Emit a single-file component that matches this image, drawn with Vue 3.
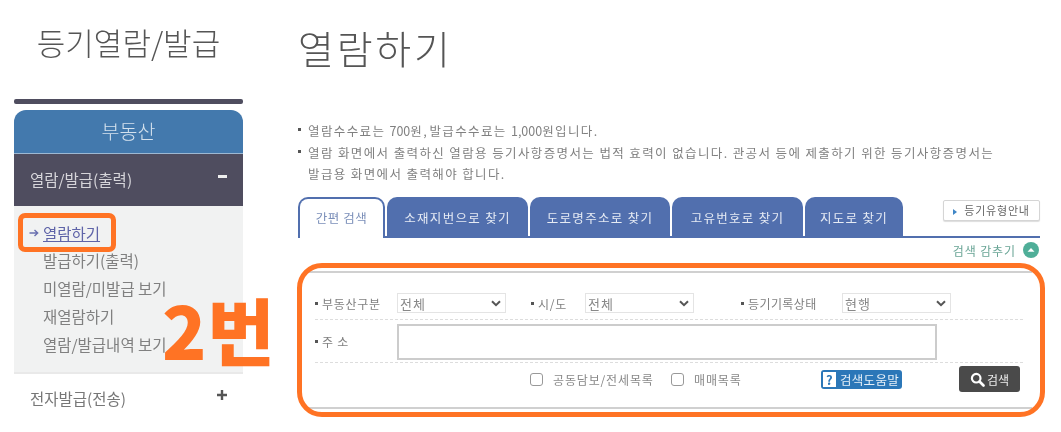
<script setup>
const items = ['발급하기(출력)', '미열람/미발급 보기', '재열람하기', '열람/발급내역 보기']
const tabs = [
  { label: '소재지번으로 찾기', w: 141 },
  { label: '도로명주소로 찾기', w: 140 },
  { label: '고유번호로 찾기', w: 131 },
  { label: '지도로 찾기', w: 98 },
]
</script>

<template>
  <div class="page">
    <aside class="side">
      <h2 class="side-title">등기열람/발급</h2>
      <div class="side-rule"></div>
      <div class="side-head">부동산</div>
      <div class="group open"><span>열람/발급(출력)</span><i class="minus"></i></div>
      <ul class="sub">
        <li class="current">
          <svg class="arrow" width="10" height="8" viewBox="0 0 10 8"><path d="M0.5 4H8.5M5.5 1 8.7 4 5.5 7" fill="none" stroke="#6a70b0" stroke-width="1.4" /></svg>
          <a>열람하기</a>
        </li>
        <li v-for="t in items" :key="t">{{ t }}</li>
      </ul>
      <div class="group closed"><span>전자발급(전송)</span><svg class="plus" width="10" height="10" viewBox="0 0 10 10"><path d="M5 0V10M0 5H10" stroke="#555" stroke-width="2.4" /></svg></div>
    </aside>

    <main class="main">
      <h1 class="title">열람하기</h1>
      <ul class="notes">
        <li>열람수수료는 <span class="num">700</span>원<span class="num">, </span>발급수수료는 <span class="num">1,000</span>원입니다.</li>
        <li>열람 화면에서 출력하신 열람용 등기사항증명서는 법적 효력이 없습니다. 관공서 등에 제출하기 위한 등기사항증명서는<br />발급용 화면에서 출력해야 합니다.</li>
      </ul>

      <div class="tabbar">
        <div class="tab active">간편 검색</div>
        <div v-for="t in tabs" :key="t.label" class="tab" :style="{ width: t.w + 'px' }">{{ t.label }}</div>
        <button class="guide"><i class="tri"></i>등기유형안내</button>
      </div>

      <div class="hide-row">
        <span>검색 감추기</span>
        <svg width="16" height="16" viewBox="0 0 16 16"><circle cx="8" cy="8" r="8" fill="#4fae98" /><path d="M4.5 9.8 8 6l3.5 3.8z" fill="#fff" /></svg>
      </div>

      <section class="panel">
        <div class="row r1">
          <label class="lb l1">부동산구분</label>
          <select class="sel"><option>전체</option></select>
          <label class="lb l2">시/도</label>
          <select class="sel"><option>전체</option></select>
          <label class="lb l3">등기기록상태</label>
          <select class="sel"><option>현행</option></select>
        </div>
        <div class="row r2">
          <label class="lb l1">주 소</label>
          <input class="addr" type="text" />
        </div>
        <div class="r3">
          <span class="cb"></span><span class="cbt t1">공동담보/전세목록</span>
          <span class="cb"></span><span class="cbt t2">매매목록</span>
          <span class="help"><b>?</b>검색도움말</span>
          <button class="search">
            <svg width="15" height="15" viewBox="0 0 15 15"><circle cx="6.2" cy="6.2" r="4.3" fill="none" stroke="#fff" stroke-width="2.2" /><path d="M9.5 9.5 13.5 13.5" stroke="#fff" stroke-width="2.6" stroke-linecap="round" /></svg>검색
          </button>
        </div>
      </section>
    </main>

    <div class="mark box"></div>
    <div class="mark panel-ring"></div>
    <div class="mark big">2번</div>
  </div>
</template>

<style>
html, body { margin: 0; background: #fff; overflow: hidden; }
</style>

<style scoped>
.page {
  position: relative;
  width: 1061px;
  height: 432px;
  overflow: hidden;
  display: flex;
  padding-left: 14px;
  box-sizing: border-box;
  font-family: "Noto Sans CJK KR", "Noto Sans", sans-serif;
  color: #666;
  background: #fff;
  filter: blur(0.55px);
}
.side { width: 229px; flex: none; }
.side-title {
  margin: 0;
  height: 99px;
  padding-top: 20px;
  box-sizing: border-box;
  text-align: center;
  font-size: 31px;
  line-height: 44px;
  font-weight: 300;
  color: #555;
}
.side-rule { height: 5px; background: #4f4d5f; border-radius: 2px; margin-bottom: 6px; }
.side-head {
  height: 43px;
  line-height: 42px;
  background: #4379ad;
  color: #d5e2ee;
  border-radius: 12px 12px 0 0;
  text-align: center;
  font-size: 19.5px;
  font-weight: 300;
  border-bottom: 1px solid #9db8d2;
}
.group {
  display: flex;
  justify-content: space-between;
  align-items: center;
  padding: 0 16px 0 16px;
  font-size: 15.5px;
}
.group.open { height: 52px; padding-bottom: 2px; box-sizing: border-box; background: #4f4d5f; color: #d6d5da; }
.group.closed { height: 50px; padding-bottom: 2px; box-sizing: border-box; color: #777; }
.minus { width: 9px; height: 3px; background: #eee; margin-top: -6px; }
.plus { margin-top: -6px; }
.sub {
  list-style: none;
  margin: 0;
  height: 168px;
  padding: 14px 0 0 29px;
  box-sizing: border-box;
  background: #f1f2f2;
  border-bottom: 2px solid #e9e9e9;
  font-size: 15.5px;
  line-height: 28px;
  color: #808080;
}
.current { margin-left: -14px; color: #5f64a8; line-height: 26px; display: flex; align-items: center; }
.arrow { width: 10px; margin: 0 4px 0 0; flex: none; }
.current a { text-decoration: underline; font-size: 15.5px; }

.main { width: 742px; margin-left: 55px; flex: none; }
.title {
  margin: 0;
  height: 118px;
  padding-top: 20px;
  box-sizing: border-box;
  font-size: 39px;
  line-height: 54px;
  font-weight: 300;
  letter-spacing: 2.8px;
  color: #555;
}
.notes {
  list-style: none;
  margin: 0;
  padding: 2px 0 0 10px;
  height: 79px;
  box-sizing: border-box;
  font-size: 12.5px;
  line-height: 21.5px;
  letter-spacing: 1.38px;
  color: #808080;
  white-space: nowrap;
}
.num { letter-spacing: 0; }
.notes li { position: relative; }
.notes li::before {
  content: "";
  position: absolute;
  left: -10px;
  top: 8px;
  width: 3px;
  height: 3px;
  background: #555;
}
.tabbar {
  display: flex;
  gap: 2px;
  height: 41px;
  box-sizing: border-box;
  border-bottom: 2px solid #516fae;
  align-items: flex-end;
  position: relative;
}
.tab {
  height: 41px;
  margin-bottom: -2px;
  box-sizing: border-box;
  background: #516fae;
  color: #e6ebf4;
  border-radius: 10px 10px 0 0;
  font-size: 12.5px;
  letter-spacing: 1.3px;
  line-height: 41px;
  text-align: center;
}
.tab.active {
  width: 87px;
  background: #fff;
  color: #7b8fb9;
  border: 2px solid #516fae;
  border-bottom: 0;
  line-height: 37px;
  letter-spacing: 0.5px;
}
.guide {
  margin-left: auto;
  align-self: flex-start;
  margin-top: 3px;
  width: 97px;
  height: 21px;
  padding: 0;
  background: #fff;
  border: 1px solid #d5d5d5;
  border-radius: 2px;
  font: 400 11px/19px "Noto Sans CJK KR", sans-serif;
  letter-spacing: 0.8px;
  color: #666;
  box-shadow: 0 1px 1px #ddd;
}
.tri {
  display: inline-block;
  border-left: 4px solid #3f86c6;
  border-top: 3px solid transparent;
  border-bottom: 3px solid transparent;
  margin-right: 7px;
}
.hide-row {
  display: flex;
  justify-content: flex-end;
  align-items: center;
  gap: 7px;
  height: 26px;
  padding: 0 1px 2px 0;
  box-sizing: border-box;
  font-size: 12px;
  letter-spacing: 0.9px;
  color: #6aa596;
}
.panel {
  margin: 7px 0 0 9px;
  width: 725px;
  height: 138px;
  box-sizing: border-box;
  border-top: 2px solid #d0d0d0;
  border-bottom: 2px solid #d0d0d0;
  padding-top: 20px;
}
.row {
  display: flex;
  align-items: center;
  margin: 0 9px 0 8px;
  box-sizing: border-box;
  border-bottom: 1px dashed #ddd;
  font-size: 12px;
}
.r1 { height: 27px; padding-bottom: 6px; }
.r2 { height: 43px; padding-top: 1px; }
.lb { position: relative; color: #808080; letter-spacing: 0.7px; flex: none; padding-left: 7px; box-sizing: border-box; }
.lb::before {
  content: "";
  position: absolute;
  left: 0;
  top: 7px;
  width: 3px;
  height: 3px;
  background: #555;
}
.l1 { width: 82px; }
.l2 { width: 54px; margin-left: 25px; }
.l3 { width: 101px; margin-left: 47px; letter-spacing: 0.4px; }
.sel {
  appearance: none;
  width: 109px;
  height: 20px;
  padding: 0 0 0 2px;
  border: 1.5px solid #e4e4e4;
  background: #fff url("data:image/svg+xml,%3Csvg xmlns='http://www.w3.org/2000/svg' width='10' height='7'%3E%3Cpath d='M1 1.2 5 5.2 9 1.2' fill='none' stroke='%23555' stroke-width='2'/%3E%3C/svg%3E") no-repeat right 4px center;
  font: 400 13px "Noto Sans CJK KR", sans-serif;
  letter-spacing: 1px;
  color: #888;
  border-radius: 0;
  outline: 0;
}
.addr {
  width: 540px;
  height: 36px;
  box-sizing: border-box;
  border: 2px solid #ccc;
  padding: 0;
  outline: 0;
  background: #fff;
}
.r3 {
  display: flex;
  align-items: center;
  height: 32px;
  padding-left: 223px;
  font-size: 12px;
  letter-spacing: 0.85px;
  color: #888;
}
.cb {
  width: 13px;
  height: 13px;
  box-sizing: border-box;
  border: 1.5px solid #999;
  border-radius: 3px;
  flex: none;
}
.cbt { margin-left: 10px; flex: none; }
.t1 { width: 118px; }
.t2 { width: 127px; }
.help {
  display: inline-flex;
  align-items: center;
  width: 81px;
  height: 19px;
  box-sizing: border-box;
  padding-left: 2px;
  gap: 4px;
  background: #2b77b8;
  border-radius: 3px;
  color: #e6f0f8;
  font-size: 12.5px;
  letter-spacing: 0.3px;
  flex: none;
}
.help b {
  width: 13px;
  height: 15px;
  background: #fff;
  color: #2b77b8;
  font-size: 13px;
  line-height: 15px;
  text-align: center;
}
.search {
  display: flex;
  align-items: center;
  justify-content: center;
  gap: 2px;
  margin-left: 57px;
  width: 61px;
  height: 26px;
  padding: 0;
  border: 0;
  border-radius: 3px;
  background: #4a4a4a;
  color: #eee;
  font: 400 12px "Noto Sans CJK KR", sans-serif;
  flex: none;
}
.mark { position: absolute; pointer-events: none; }
.box {
  left: 18px;
  top: 213px;
  width: 98px;
  height: 39px;
  box-sizing: border-box;
  border: 5px solid #ff7324;
  border-radius: 7px;
}
.panel-ring {
  left: 297px;
  top: 263px;
  width: 748px;
  height: 154px;
  box-sizing: border-box;
  border: 5px solid #ff7324;
  border-radius: 25px;
}
.big {
  left: 162px;
  top: 283px;
  font-size: 73px;
  line-height: 90px;
  font-weight: 900;
  color: #ff7324;
  letter-spacing: 1px;
}
</style>
